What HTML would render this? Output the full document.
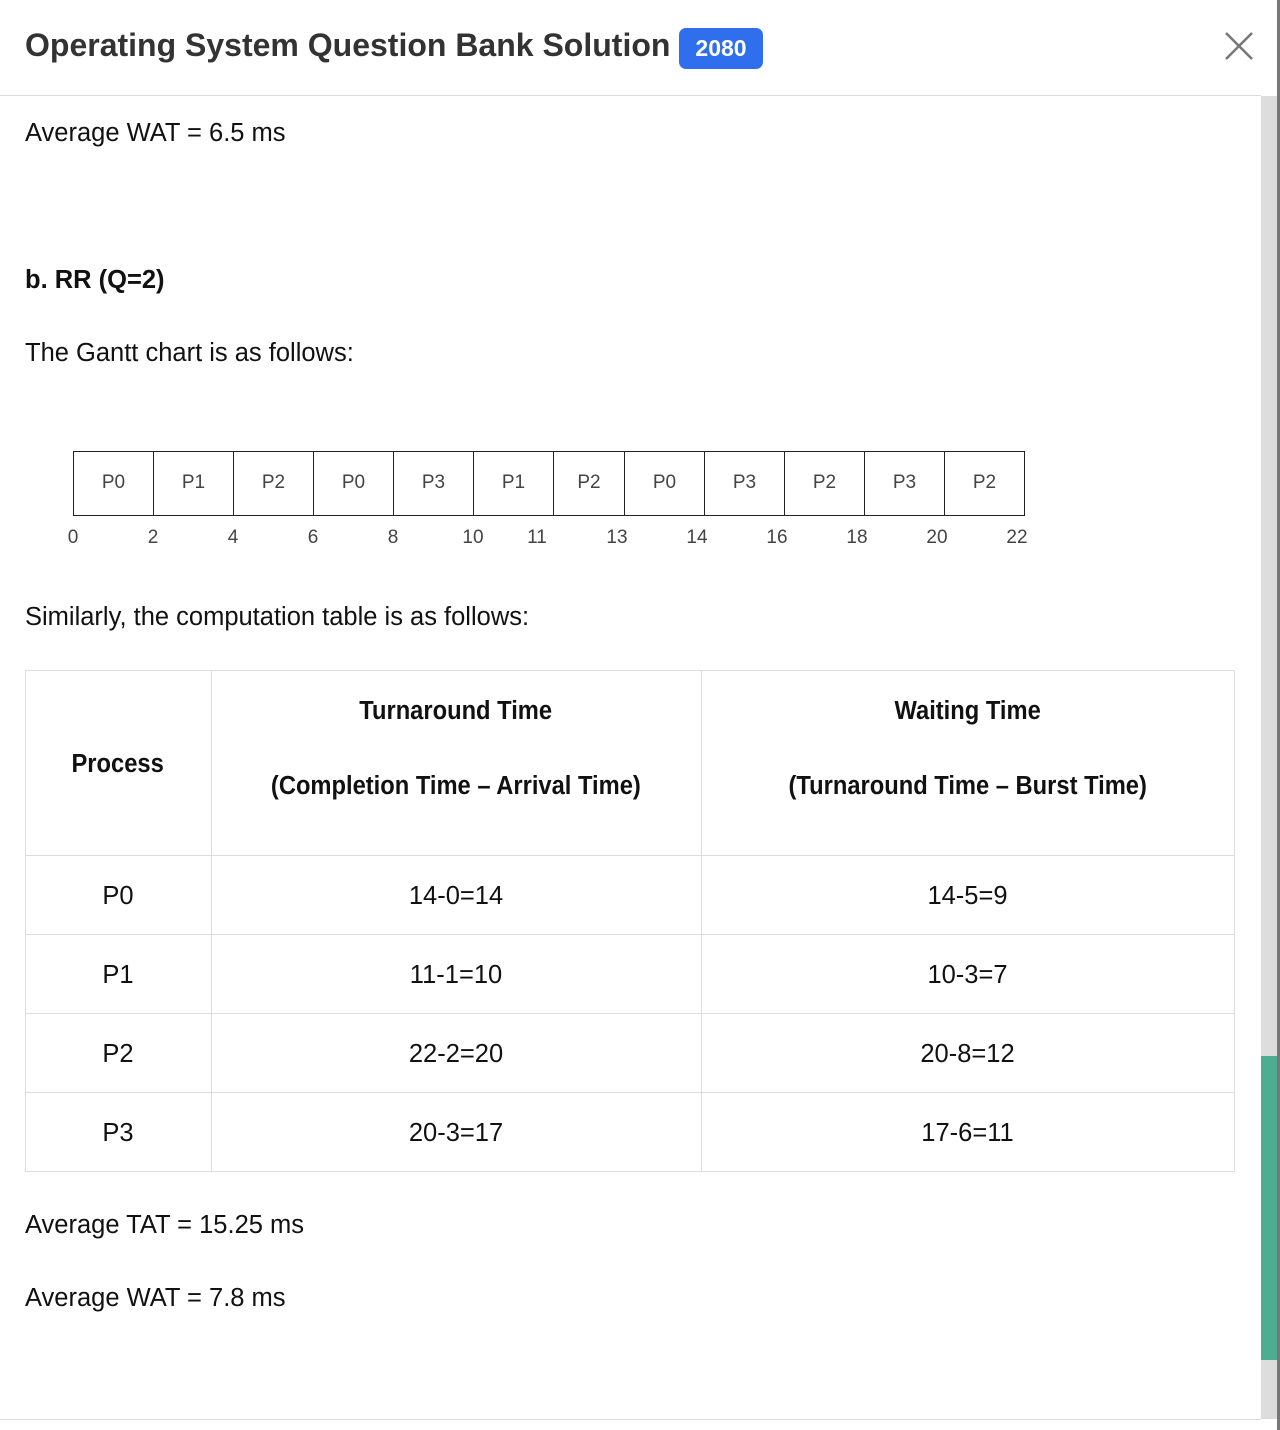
<!DOCTYPE html>
<html><head><meta charset="utf-8"><style>
*{margin:0;padding:0;box-sizing:border-box}
html,body{width:1280px;height:1430px;background:#fff;overflow:hidden;font-family:"Liberation Sans",Arial,sans-serif;color:#111;position:relative}
.a{position:absolute;white-space:nowrap}
.t{font-size:25.5px;line-height:30px}
.b{font-weight:bold}
.c{text-align:center}
.hl{position:absolute;background:#ddd;height:1px}
.vl{position:absolute;background:#ddd;width:1px}
.g{position:absolute;top:451px;height:65px;width:81px;border:1.5px solid #222;font-size:19px;color:#444;text-align:center;line-height:62px}
.n{position:absolute;top:527px;font-size:19px;color:#444;width:40px;text-align:center}
.sq{display:inline-block;transform:scaleX(0.93)}
</style></head><body>
<div class="a b" style="left:25px;top:26px;font-size:32px;line-height:38px;color:#333">Operating System Question Bank Solution</div>
<div class="a b" style="left:679px;top:28px;width:84px;height:41px;background:#2f6fed;border-radius:7px;color:#fff;font-size:23px;line-height:41px;text-align:center">2080</div>
<svg class="a" style="left:1224px;top:31px" width="30" height="30" viewBox="0 0 30 30"><path d="M2 2L28 28M28 2L2 28" stroke="#777" stroke-width="2.5" fill="none"/></svg>
<div class="hl" style="left:0;top:95px;width:1261px"></div>
<div class="a" style="left:1261px;top:96px;width:16px;height:1323px;background:#ddd"></div>
<div class="a" style="left:1261px;top:1056px;width:16px;height:304px;background:#4dad91"></div>
<div class="a" style="left:1277px;top:0;width:3px;height:1430px;background:#777"></div>
<div class="hl" style="left:0;top:1419px;width:1261px"></div>

<div class="a t" style="left:25px;top:118px">Average WAT = 6.5 ms</div>
<div class="a t b" style="left:25px;top:265px">b. RR (Q=2)</div>
<div class="a t" style="left:25px;top:338px">The Gantt chart is as follows:</div>

<div class="g" style="left:73px">P0</div><div class="g" style="left:153px">P1</div><div class="g" style="left:233px">P2</div><div class="g" style="left:313px">P0</div><div class="g" style="left:393px">P3</div><div class="g" style="left:473px">P1</div><div class="g" style="left:553px;width:72px">P2</div><div class="g" style="left:624px">P0</div><div class="g" style="left:704px">P3</div><div class="g" style="left:784px">P2</div><div class="g" style="left:864px">P3</div><div class="g" style="left:944px">P2</div>
<div class="n" style="left:53px">0</div><div class="n" style="left:133px">2</div><div class="n" style="left:213px">4</div><div class="n" style="left:293px">6</div><div class="n" style="left:373px">8</div><div class="n" style="left:453px">10</div><div class="n" style="left:517px">11</div><div class="n" style="left:597px">13</div><div class="n" style="left:677px">14</div><div class="n" style="left:757px">16</div><div class="n" style="left:837px">18</div><div class="n" style="left:917px">20</div><div class="n" style="left:997px">22</div>

<div class="a t" style="left:25px;top:602px">Similarly, the computation table is as follows:</div>

<div class="hl" style="left:25px;top:670px;width:1210px"></div>
<div class="hl" style="left:25px;top:855px;width:1210px"></div>
<div class="hl" style="left:25px;top:934px;width:1210px"></div>
<div class="hl" style="left:25px;top:1013px;width:1210px"></div>
<div class="hl" style="left:25px;top:1092px;width:1210px"></div>
<div class="hl" style="left:25px;top:1171px;width:1210px"></div>
<div class="vl" style="left:25px;top:670px;height:502px"></div>
<div class="vl" style="left:211px;top:670px;height:502px"></div>
<div class="vl" style="left:701px;top:670px;height:502px"></div>
<div class="vl" style="left:1234px;top:670px;height:502px"></div>

<div class="a t b c" style="left:25px;width:186px;top:749px"><span class="sq">Process</span></div>
<div class="a t b c" style="left:211px;width:490px;top:696px"><span class="sq">Turnaround Time</span></div>
<div class="a t b c" style="left:211px;width:490px;top:771px"><span class="sq">(Completion Time – Arrival Time)</span></div>
<div class="a t b c" style="left:701px;width:533px;top:696px"><span class="sq">Waiting Time</span></div>
<div class="a t b c" style="left:701px;width:533px;top:771px"><span class="sq">(Turnaround Time – Burst Time)</span></div>

<div class="a t c" style="left:25px;width:186px;top:881px">P0</div>
<div class="a t c" style="left:211px;width:490px;top:881px">14-0=14</div>
<div class="a t c" style="left:701px;width:533px;top:881px">14-5=9</div>
<div class="a t c" style="left:25px;width:186px;top:960px">P1</div>
<div class="a t c" style="left:211px;width:490px;top:960px">11-1=10</div>
<div class="a t c" style="left:701px;width:533px;top:960px">10-3=7</div>
<div class="a t c" style="left:25px;width:186px;top:1039px">P2</div>
<div class="a t c" style="left:211px;width:490px;top:1039px">22-2=20</div>
<div class="a t c" style="left:701px;width:533px;top:1039px">20-8=12</div>
<div class="a t c" style="left:25px;width:186px;top:1118px">P3</div>
<div class="a t c" style="left:211px;width:490px;top:1118px">20-3=17</div>
<div class="a t c" style="left:701px;width:533px;top:1118px">17-6=11</div>

<div class="a t" style="left:25px;top:1210px">Average TAT = 15.25 ms</div>
<div class="a t" style="left:25px;top:1283px">Average WAT = 7.8 ms</div>
</body></html>
